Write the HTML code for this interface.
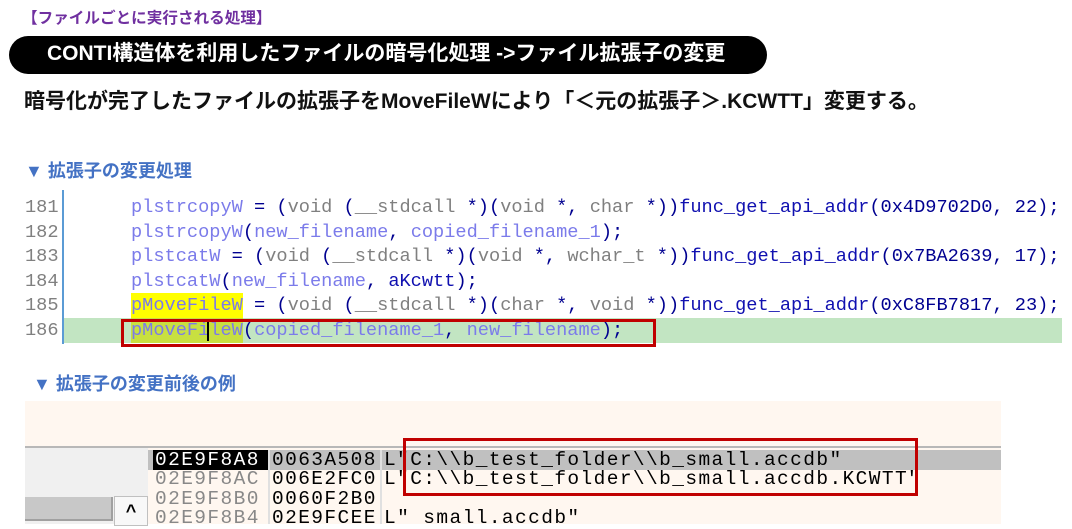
<!DOCTYPE html>
<html><head><meta charset="utf-8"><style>
body{margin:0;width:1072px;height:524px;background:#fff;position:relative;overflow:hidden;font-family:"Liberation Sans","Noto Sans CJK JP",sans-serif}
.a{position:absolute;white-space:pre}
.code{font-family:"Liberation Mono",monospace;font-size:18.65px;line-height:24.6px}
.v{color:#7b7bea}.p{color:#000080}.t{color:#808080}.f{color:#1010b0}.g{color:#000090}
.ln{font-family:"Liberation Mono",monospace;font-size:18.65px;color:#808080;line-height:24.6px}
.dbg{font-family:"Liberation Mono",monospace;font-size:19.5px;letter-spacing:1.4px;line-height:19.3px}
</style></head><body>
<div class="a" style="left:22px;top:6px;font-size:15.6px;font-weight:bold;color:#7030a0">【ファイルごとに実行される処理】</div>
<div class="a" style="left:9px;top:36px;width:758px;height:38px;background:#000;border-radius:19px"></div>
<div class="a" style="left:47px;top:41px;font-size:21px;font-weight:bold;color:#fff;line-height:26px">CONTI構造体を利用したファイルの暗号化処理 -&gt;ファイル拡張子の変更</div>
<div class="a" style="left:24px;top:88px;font-size:21px;font-weight:bold;color:#111;line-height:28px">暗号化が完了したファイルの拡張子をMoveFileWにより「＜元の拡張子＞.KCWTT」変更する。</div>
<div class="a" style="left:25px;top:157px;font-size:18px;font-weight:bold;color:#4472c4">▼ 拡張子の変更処理</div>

<div class="a" style="left:62px;top:190px;width:2px;height:154px;background:#5b9bd5"></div>
<div class="a" style="left:64px;top:318px;width:998px;height:25px;background:#c2e5c2"></div>
<div class="a" style="left:131px;top:293px;width:112px;height:25px;background:#ffff00"></div>
<div class="a" style="left:131px;top:318px;width:112px;height:25px;background:#c8e040"></div>
<div class="a ln" style="left:25px;top:195px">181
182
183
184
185
186</div>
<div class="a code" style="left:131px;top:195px"><span class="v">plstrcopyW</span><span class="g"> = (</span><span class="t">void</span><span class="g"> (</span><span class="t">__stdcall</span><span class="g"> *)(</span><span class="t">void</span><span class="g"> *, </span><span class="t">char</span><span class="g"> *))</span><span class="f">func_get_api_addr</span><span class="g">(0x4D9702D0, 22);</span>
<span class="v">plstrcopyW</span><span class="g">(</span><span class="v">new_filename</span><span class="g">, </span><span class="v">copied_filename_1</span><span class="g">);</span>
<span class="v">plstcatW</span><span class="g"> = (</span><span class="t">void</span><span class="g"> (</span><span class="t">__stdcall</span><span class="g"> *)(</span><span class="t">void</span><span class="g"> *, </span><span class="t">wchar_t</span><span class="g"> *))</span><span class="f">func_get_api_addr</span><span class="g">(0x7BA2639, 17);</span>
<span class="v">plstcatW</span><span class="g">(</span><span class="v">new_filename</span><span class="g">, </span><span class="f">aKcwtt</span><span class="g">);</span>
<span class="v">pMoveFileW</span><span class="g"> = (</span><span class="t">void</span><span class="g"> (</span><span class="t">__stdcall</span><span class="g"> *)(</span><span class="t">char</span><span class="g"> *, </span><span class="t">void</span><span class="g"> *))</span><span class="f">func_get_api_addr</span><span class="g">(0xC8FB7817, 23);</span>
<span class="v">pMoveFileW</span><span class="g">(</span><span class="v">copied_filename_1</span><span class="g">, </span><span class="v">new_filename</span><span class="g">);</span></div>
<div class="a" style="left:207px;top:320px;width:2px;height:21px;background:#000"></div>
<div class="a" style="left:121px;top:319px;width:529px;height:22px;border:3px solid #c00000"></div>

<div class="a" style="left:33px;top:370px;font-size:18px;font-weight:bold;color:#4472c4">▼ 拡張子の変更前後の例</div>

<div class="a" style="left:25px;top:401px;width:976px;height:123px;background:#fff7f0"></div>
<div class="a" style="left:25px;top:446px;width:976px;height:2px;background:#b8b8b8"></div>
<div class="a" style="left:25px;top:448px;width:123px;height:76px;background:#f0f0f0"></div>
<div class="a" style="left:25px;top:497px;width:86px;height:22px;background:#c8c8c8;border-right:2px solid #a0a0a0;border-bottom:2px solid #a0a0a0"></div>
<div class="a" style="left:114px;top:496px;width:32px;height:28px;background:#f8f8f8;border:1px solid #c0c0c0;font-size:18px;font-weight:bold;text-align:center;line-height:28px">^</div>
<div class="a" style="left:148px;top:450px;width:853px;height:20px;background:#c0c0c0"></div>
<div class="a" style="left:153px;top:450px;width:115px;height:20px;background:#000"></div>
<div class="a" style="left:268px;top:450px;width:2px;height:74px;background:#e0e0e0"></div>
<div class="a" style="left:380px;top:450px;width:2px;height:74px;background:#e0e0e0"></div>
<div class="a dbg" style="left:155px;top:451px;color:#888"><span style="color:#fff">02E9F8A8</span>
02E9F8AC
02E9F8B0
02E9F8B4</div>
<div class="a dbg" style="left:272px;top:451px;color:#000">0063A508
006E2FC0
0060F2B0
02E9FCEE</div>
<div class="a dbg" style="left:384px;top:451px;color:#000">L"C:\\b_test_folder\\b_small.accdb"
L"C:\\b_test_folder\\b_small.accdb.KCWTT"

L" small.accdb"</div>
<div class="a" style="left:403px;top:438px;width:509px;height:52px;border:3px solid #c00000"></div>
</body></html>
